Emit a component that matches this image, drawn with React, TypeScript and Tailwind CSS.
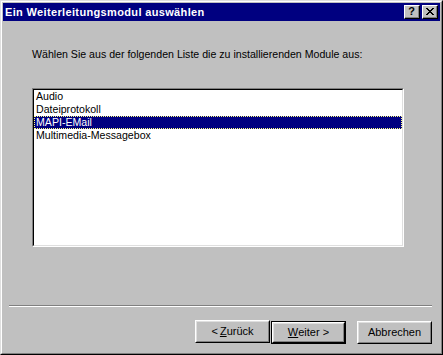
import React, { useState } from 'react'

const modules = ['Audio', 'Dateiprotokoll', 'MAPI-EMail', 'Multimedia-Messagebox']

function TitleButton({ children }: { children: React.ReactNode }) {
  return (
    <div className="w-[16px] h-[14px] bg-[#c0c0c0] border-t border-l border-t-white border-l-white border-r border-b border-r-black border-b-black">
      <div className="w-full h-full border-r border-b border-r-[#808080] border-b-[#808080] flex items-center justify-center">
        {children}
      </div>
    </div>
  )
}

function Win95Button({ children, isDefault = false }: { children: React.ReactNode; isDefault?: boolean }) {
  const inner = (
    <div className="w-full h-full border-t border-l border-t-white border-l-white border-r border-b border-r-black border-b-black">
      <div className="w-full h-full border-t border-l border-t-[#dfdfdf] border-l-[#dfdfdf] border-r border-b border-r-[#808080] border-b-[#808080] flex items-center justify-center text-[11px] text-black">
        {children}
      </div>
    </div>
  )
  return (
    <button className={`w-[75px] h-[23px] bg-[#c0c0c0] ${isDefault ? 'border border-black' : ''}`}>
      {inner}
    </button>
  )
}

export default function App() {
  const [selected, setSelected] = useState(2)

  return (
    <div
      className="w-[443px] h-[355px] bg-[#c0c0c0] overflow-hidden"
      style={{ fontFamily: '"Liberation Sans", Arial, sans-serif' }}
    >
      {/* Window frame */}
      <div className="w-full h-full border-t border-l border-t-[#dfdfdf] border-l-[#dfdfdf] border-r border-b border-r-black border-b-black">
        <div className="w-full h-full border-t border-l border-t-white border-l-white border-r border-b border-r-[#808080] border-b-[#808080] p-px flex flex-col">
          {/* Title bar */}
          <div className="h-[18px] bg-[#000080] flex items-center justify-between pl-[2px] pr-[2px]">
            <span className="text-white font-bold text-[11px] tracking-[0.35px] leading-none">Ein Weiterleitungsmodul auswählen</span>
            <div className="flex gap-[2px]">
              <TitleButton>
                <span className="text-black font-bold text-[11px] leading-none">?</span>
              </TitleButton>
              <TitleButton>
                <svg width="8" height="7" viewBox="0 0 8 7" shapeRendering="crispEdges">
                  <path d="M0 0h2v1H0zM6 0h2v1H6zM1 1h2v1H1zM5 1h2v1H5zM2 2h4v1H2zM3 3h2v1H3zM2 4h4v1H2zM1 5h2v1H1zM5 5h2v1H5zM0 6h2v1H0zM6 6h2v1H6z" fill="black" />
                </svg>
              </TitleButton>
            </div>
          </div>

          {/* Body */}
          <div className="flex-1 flex flex-col">
            <p className="mt-[27px] ml-[29px] text-[10.6px] leading-[13px] text-black">
              Wählen Sie aus der folgenden Liste die zu installierenden Module aus:
            </p>

            {/* List box */}
            <div className="mt-[27px] ml-[29px] w-[372px] h-[159px] border-t border-l border-t-[#808080] border-l-[#808080] border-r border-b border-r-white border-b-white">
              <div className="w-full h-full bg-white border-t border-l border-t-black border-l-black border-r border-b border-r-[#dfdfdf] border-b-[#dfdfdf]">
                {modules.map((m, i) => (
                  <div
                    key={m}
                    onClick={() => setSelected(i)}
                    className={
                      i === selected
                        ? 'h-[13px] pl-[1px] text-[10.6px] leading-[11px] bg-[#000080] text-white border border-dotted border-[#ffff7f]'
                        : 'h-[13px] pl-[2px] text-[10.6px] leading-[13px] text-black'
                    }
                  >
                    {m}
                  </div>
                ))}
              </div>
            </div>

            {/* Separator */}
            <div className="mt-[58px] ml-[6px] mr-[8px] border-t border-t-[#808080] border-b border-b-white" />

            {/* Buttons */}
            <div className="mt-[12px] mr-[8px] flex justify-end items-center">
              <Win95Button>
                &lt; <span className="underline ml-[2px]">Z</span>urück
              </Win95Button>
              <div className="ml-[1px]">
                <Win95Button isDefault>
                  <span className="underline">W</span>eiter &gt;
                </Win95Button>
              </div>
              <div className="ml-[11px]">
                <Win95Button>Abbrechen</Win95Button>
              </div>
            </div>
          </div>
        </div>
      </div>
    </div>
  )
}
